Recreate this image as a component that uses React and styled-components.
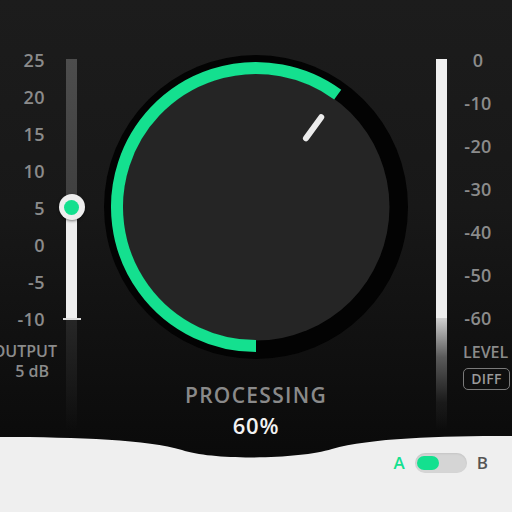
import React from 'react';
import styled, { createGlobalStyle } from 'styled-components';

const GREEN = '#14e08f';

const GlobalStyle = createGlobalStyle`
  html, body {
    margin: 0;
    padding: 0;
    background: #efefef;
  }
  body {
    font-family: "Open Sans", "Liberation Sans", sans-serif;
  }
`;

const Plugin = styled.div`
  width: 512px;
  height: 512px;
  overflow: hidden;
  background: #efefef;
`;

// dark body of the plugin, bottom edge cut into a soft wave
const Rack = styled.div`
  height: 462px;
  background: linear-gradient(180deg, #1c1c1c 0%, #181818 45%, #0a0a0a 100%);
  clip-path: path('M0 0 H512 V436 C440 436 370 438 332 449 C300 459 214 461 182 450 C148 440 80 437 0 437 Z');
  display: grid;
  grid-template-columns: 104px 304px 104px;
  align-items: start;
`;

const OutputSide = styled.div`
  display: grid;
  grid-template-columns: 45px 11px;
  grid-template-rows: 296px auto;
  column-gap: 21px;
  padding-top: 41.5px;
`;

const Scale = styled.div`
  display: flex;
  flex-direction: column;
  align-items: ${p => (p.$align === 'center' ? 'center' : 'flex-end')};
`;

const Mark = styled.div`
  height: ${p => p.$step}px;
  line-height: ${p => p.$step}px;
  font-size: 18px;
  font-weight: 600;
  letter-spacing: 0.4px;
  color: #8b8b8b;
  white-space: nowrap;
`;

const SideLabels = styled.div`
  grid-row: 2;
  display: flex;
  flex-direction: column;
  align-items: ${p => (p.$left ? 'flex-start' : 'flex-end')};
  margin-top: ${p => p.$top}px;
  margin-right: ${p => p.$pullRight || 0}px;
  padding-left: ${p => p.$padLeft || 0}px;
`;

const Caption = styled.div`
  font-size: 16px;
  line-height: 20px;
  font-weight: 600;
  color: #8b8b8b;
  white-space: nowrap;
  padding-right: ${p => p.$inset || 0}px;
`;

const TrackColumn = styled.div`
  grid-row: 1 / span 2;
  padding-top: ${p => p.$top}px;
  display: flex;
  flex-direction: column;
  align-items: center;
`;

const Track = styled.div`
  position: relative;
  width: 11px;
  height: 259px;
  background: linear-gradient(
    180deg,
    #4d4d4d 0,
    #3f3f3f ${p => p.$pos}px,
    #eeeeee ${p => p.$pos}px,
    #eeeeee 100%
  );
`;

const Thumb = styled.div`
  position: absolute;
  left: 50%;
  width: 26px;
  height: 26px;
  margin: -13px 0 0 -13px;
  border-radius: 50%;
  background: #eeeeee;
  box-shadow: 0 1px 3px rgba(0, 0, 0, 0.5);
  display: flex;
  align-items: center;
  justify-content: center;

  &::after {
    content: '';
    width: 15px;
    height: 15px;
    border-radius: 50%;
    background: ${GREEN};
  }
`;

const Tick = styled.div`
  width: 18px;
  height: 2px;
  background: #dcdcdc;
`;

const TrackTail = styled.div`
  width: 11px;
  height: 110px;
  background: linear-gradient(180deg, #262626 0%, rgba(30, 30, 30, 0) 100%);
`;

const Meter = styled.div`
  width: 11px;
  height: 259px;
  background: #efefef;
`;

const MeterTail = styled.div`
  width: 11px;
  height: 112px;
  background: linear-gradient(180deg, #d0d0d0 0%, #5a5a5a 35%, #1a1a1a 75%, rgba(20, 20, 20, 0) 100%);
`;

const LevelSide = styled.div`
  display: grid;
  grid-template-columns: 11px 62px;
  grid-template-rows: 301px auto;
  padding-left: 28px;
  padding-top: 38.5px;
`;

const DiffButton = styled.button`
  margin-top: 6px;
  width: 47px;
  height: 22px;
  padding: 0;
  border: 1.5px solid #7a7a7a;
  border-radius: 5px;
  background: transparent;
  color: #9a9a9a;
  font-family: inherit;
  font-size: 14px;
  font-weight: 600;
  letter-spacing: 0.3px;
  line-height: 18px;
`;

const Deck = styled.div`
  display: flex;
  flex-direction: column;
  align-items: center;
  padding-top: 54.5px;
`;

const KnobFace = styled.svg`
  display: block;
  width: 304px;
  height: 304px;
`;

const ParamName = styled.div`
  margin-top: 23.5px;
  font-size: 21px;
  line-height: 26px;
  font-weight: 600;
  letter-spacing: 1.3px;
  color: #8a8a8a;
`;

const ParamValue = styled.div`
  margin-top: 4px;
  font-size: 22px;
  line-height: 26px;
  font-weight: 600;
  letter-spacing: 0.8px;
  color: #f2f2f2;
`;

const Footer = styled.div`
  margin-top: -26px;
  height: 76px;
  display: flex;
  justify-content: flex-end;
  align-items: flex-start;
  padding: 17px 24px 0 0;
  box-sizing: border-box;
`;

const ABSwitch = styled.div`
  display: flex;
  align-items: center;
  gap: 10px;
  height: 20px;
`;

const SlotName = styled.span`
  font-size: 17px;
  font-weight: 600;
  line-height: 20px;
  color: ${p => (p.$on ? GREEN : '#555555')};
`;

const Pill = styled.div`
  width: 52px;
  height: 20px;
  box-sizing: border-box;
  padding: 3px 2px;
  border-radius: 10px;
  background: #d5d5d5;
  box-shadow: inset 0 1px 2px rgba(0, 0, 0, 0.08);
  display: flex;
  justify-content: ${p => (p.$b ? 'flex-end' : 'flex-start')};
`;

const PillKnob = styled.div`
  width: 22px;
  height: 14px;
  border-radius: 7px;
  background: ${GREEN};
`;

const polar = (r, deg) => {
  const a = (deg * Math.PI) / 180;
  return [152 + r * Math.sin(a), 152 - r * Math.cos(a)];
};

function Knob({ value }) {
  // sweep starts at 6 o'clock and runs clockwise a full turn at 100%
  const endDeg = 180 + value * 360;
  const [sx, sy] = polar(139, 180);
  const [ex, ey] = polar(139, endDeg);
  const large = value * 360 > 180 ? 1 : 0;
  const [p1x, p1y] = polar(85, endDeg);
  const [p2x, p2y] = polar(111, endDeg);
  return (
    <KnobFace viewBox="0 0 304 304">
      <circle cx="152" cy="152" r="152" fill="#030303" />
      <circle cx="152" cy="152" r="133.5" fill="#252525" />
      <path
        d={`M${sx} ${sy} A139 139 0 ${large} 1 ${ex} ${ey}`}
        fill="none"
        stroke={GREEN}
        strokeWidth="12"
      />
      <line x1={p1x} y1={p1y} x2={p2x} y2={p2y} stroke="#ececec" strokeWidth="6" strokeLinecap="round" />
    </KnobFace>
  );
}

const outputMarks = ['25', '20', '15', '10', '5', '0', '-5', '-10'];
const levelMarks = ['0', '-10', '-20', '-30', '-40', '-50', '-60'];

export default function App() {
  const gain = 5;
  const thumbPos = ((25 - gain) / 35) * 259;

  return (
    <Plugin>
      <GlobalStyle />
      <Rack>
        <OutputSide>
          <Scale>
            {outputMarks.map(m => (
              <Mark key={m} $step={37}>{m}</Mark>
            ))}
          </Scale>
          <SideLabels $top={3.5} $pullRight={-12}>
            <Caption>OUTPUT</Caption>
            <Caption $inset={8}>5 dB</Caption>
          </SideLabels>
          <TrackColumn $top={17.5} style={{ gridColumn: 2 }}>
            <Track $pos={thumbPos}>
              <Thumb style={{ top: thumbPos }} />
            </Track>
            <Tick />
            <TrackTail />
          </TrackColumn>
        </OutputSide>

        <Deck>
          <Knob value={0.6} />
          <ParamName>PROCESSING</ParamName>
          <ParamValue>60%</ParamValue>
        </Deck>

        <LevelSide>
          <TrackColumn $top={20.5} style={{ gridColumn: 1 }}>
            <Meter />
            <MeterTail />
          </TrackColumn>
          <Scale $align="center" style={{ gridColumn: 2 }}>
            {levelMarks.map(m => (
              <Mark key={m} $step={43}>{m}</Mark>
            ))}
          </Scale>
          <SideLabels $left $top={2.5} $padLeft={16} style={{ gridColumn: 2 }}>
            <Caption>LEVEL</Caption>
            <DiffButton>DIFF</DiffButton>
          </SideLabels>
        </LevelSide>
      </Rack>

      <Footer>
        <ABSwitch>
          <SlotName $on>A</SlotName>
          <Pill>
            <PillKnob />
          </Pill>
          <SlotName>B</SlotName>
        </ABSwitch>
      </Footer>
    </Plugin>
  );
}
